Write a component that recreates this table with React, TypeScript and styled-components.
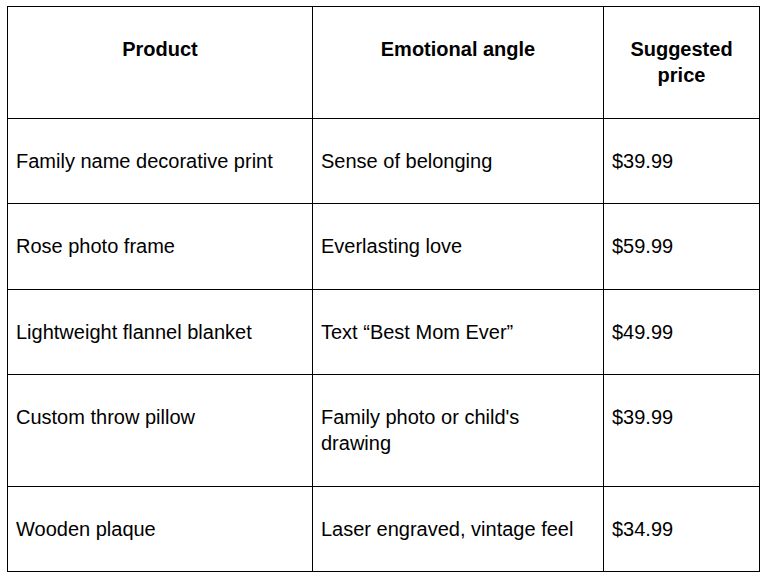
import React from 'react';
import styled, { createGlobalStyle } from 'styled-components';

const GlobalStyle = createGlobalStyle`
	html, body {
		margin: 0;
		background: #ffffff;
	}
`;

const Page = styled.div`
	padding: 6px 0 0 7px;
	font-family: Arial, "Liberation Sans", sans-serif;
	color: #000000;
`;

const Table = styled.table`
	border-collapse: collapse;
	table-layout: fixed;
	width: 752px;
	font-size: 20px;
	line-height: 26px;
`;

const Col = styled.col<{ $width: number }>`
	width: ${(p) => p.$width}px;
`;

const HeadCell = styled.th`
	border: 1px solid #000000;
	padding: 29px 10px 30px 10px;
	vertical-align: top;
	text-align: center;
	font-weight: 700;
`;

const Cell = styled.td`
	border: 1px solid #000000;
	padding: 29px 12px 29.4px 8px;
	vertical-align: top;
	text-align: left;
	font-weight: 400;
`;

const rows = [
	{ product: 'Family name decorative print', angle: 'Sense of belonging', price: '$39.99' },
	{ product: 'Rose photo frame', angle: 'Everlasting love', price: '$59.99' },
	{ product: 'Lightweight flannel blanket', angle: 'Text \u201cBest Mom Ever\u201d', price: '$49.99' },
	{ product: 'Custom throw pillow', angle: "Family photo or child's drawing", price: '$39.99' },
	{ product: 'Wooden plaque', angle: 'Laser engraved, vintage feel', price: '$34.99' },
];

const App = () => {
	return (
		<>
			<GlobalStyle />
			<Page>
				<Table>
					<colgroup>
						<Col $width={305} />
						<Col $width={291} />
						<Col $width={156} />
					</colgroup>
					<thead>
						<tr>
							<HeadCell>Product</HeadCell>
							<HeadCell>Emotional angle</HeadCell>
							<HeadCell>Suggested price</HeadCell>
						</tr>
					</thead>
					<tbody>
						{rows.map((row, index) => (
							<tr key={index}>
								<Cell>{row.product}</Cell>
								<Cell>{row.angle}</Cell>
								<Cell>{row.price}</Cell>
							</tr>
						))}
					</tbody>
				</Table>
			</Page>
		</>
	);
};

export default App;
